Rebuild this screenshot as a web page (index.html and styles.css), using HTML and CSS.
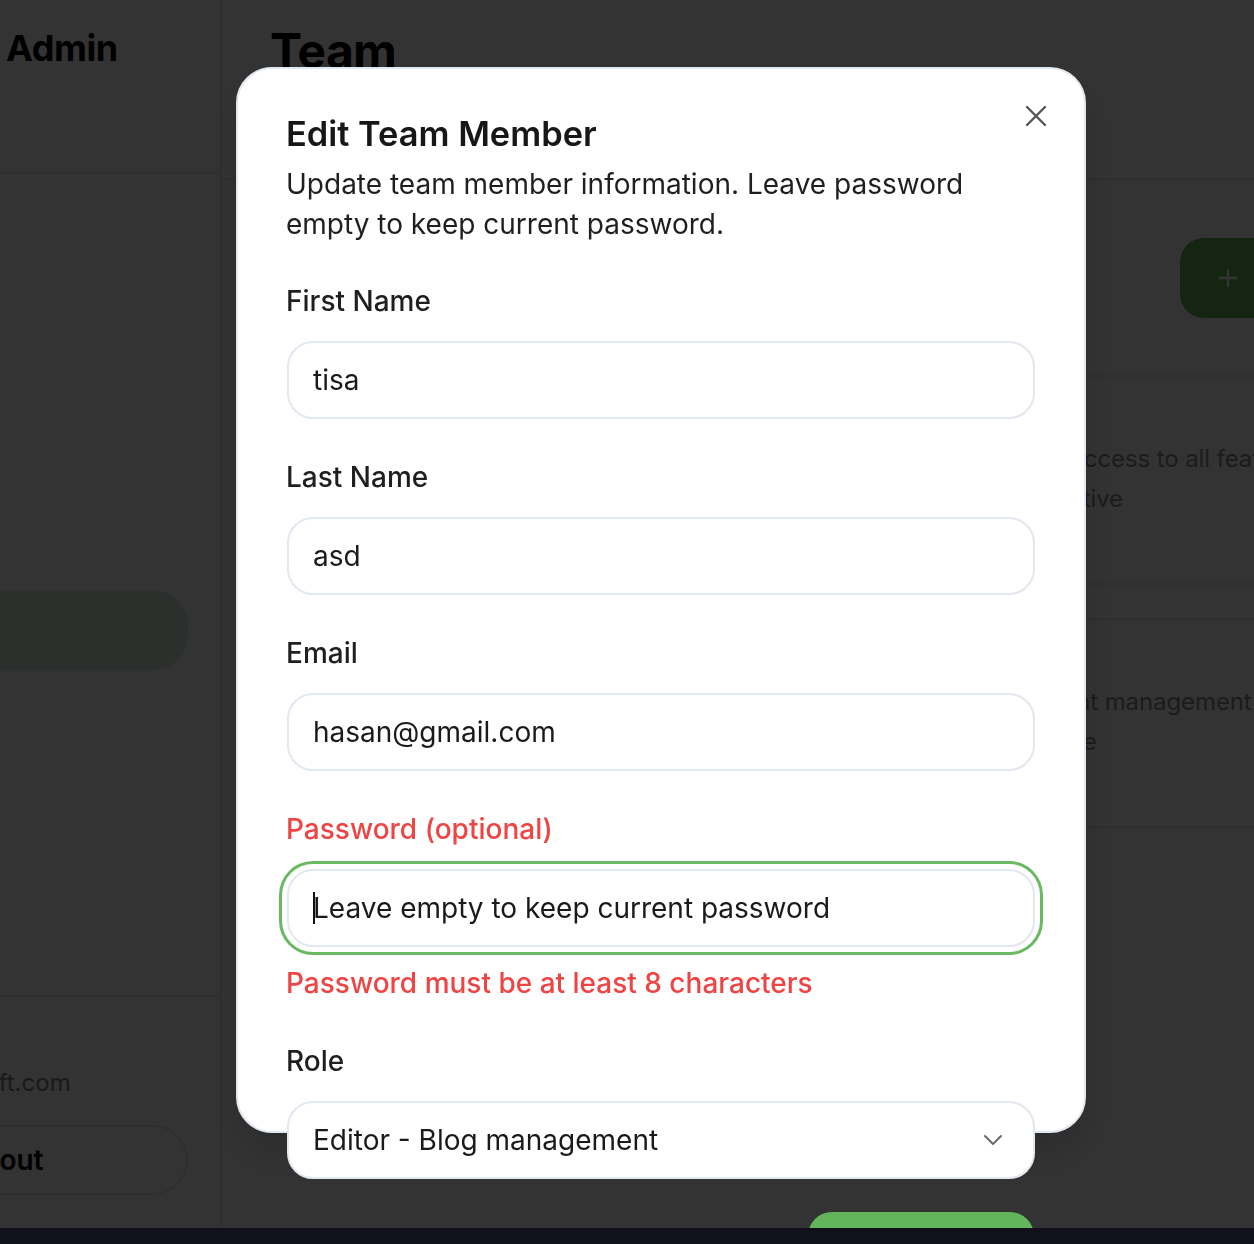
FILE: index.html
```html
<!DOCTYPE html>
<html lang="en">
<head>
<meta charset="utf-8">
<title>Team – Admin</title>
<link rel="stylesheet" href="styles.css">
</head>
<body>
<div class="app">
  <aside class="sidebar">
    <div class="brand"><span class="brand-name">Admin</span></div>
    <nav class="nav">
      <a class="nav-item">Home</a>
      <a class="nav-item">Posts</a>
      <a class="nav-item">Pages</a>
      <a class="nav-item">Media</a>
      <a class="nav-item active">Team</a>
    </nav>
    <div class="sidebar-foot">
      <div class="user-name">Admin</div>
      <div class="user-email">admin@nxsoft.com</div>
      <button class="logout">Logout</button>
    </div>
  </aside>
  <main class="main">
    <header class="main-head">
      <h1 class="page-title">Team</h1>
      <p class="page-sub">Manage your team members</p>
    </header>
    <div class="toolbar">
      <button class="add-btn">
        <svg class="add-icon" viewBox="0 0 24 24" width="28" height="28" fill="none" stroke="currentColor" stroke-width="2" stroke-linecap="round"><path d="M12 5v14M5 12h14"/></svg>
        <span>Add Member</span>
      </button>
    </div>
    <div class="list">
      <div class="card">
        <div class="card-info">
          <div class="card-name">Admin User</div>
          <div class="card-mail">admin@nxsoft.com</div>
        </div>
        <div class="card-role">
          <div class="role-line">Total access to all features</div>
          <div class="role-line">Not active</div>
        </div>
      </div>
      <div class="card">
        <div class="card-info">
          <div class="card-name">tisa asd</div>
          <div class="card-mail">hasan@gmail.com</div>
        </div>
        <div class="card-role">
          <div class="role-line">Content management</div>
          <div class="role-line">Inactive</div>
        </div>
      </div>
    </div>
  </main>
</div>

<div class="overlay"></div>

<div class="modal">
  <button class="modal-close" aria-label="Close">
    <svg viewBox="0 0 24 24" width="24" height="24" fill="none" stroke="currentColor" stroke-width="2.4" stroke-linecap="round"><path d="M3 3L21 21M21 3L3 21"/></svg>
  </button>
  <h2 class="modal-title">Edit Team Member</h2>
  <p class="modal-desc">Update team member information. Leave password empty to keep current password.</p>
  <div class="form">
    <div class="field">
      <label class="label">First Name</label>
      <div class="input">tisa</div>
    </div>
    <div class="field">
      <label class="label">Last Name</label>
      <div class="input">asd</div>
    </div>
    <div class="field">
      <label class="label">Email</label>
      <div class="input">hasan@gmail.com</div>
    </div>
    <div class="field">
      <label class="label label-error">Password (optional)</label>
      <div class="input input-focus"><span class="caret"></span>Leave empty to keep current password</div>
      <p class="error-text">Password must be at least 8 characters</p>
    </div>
    <div class="field">
      <label class="label">Role</label>
      <div class="input select">
        <span>Editor - Blog management</span>
        <svg class="chevron" viewBox="0 0 20 12" width="20" height="12" fill="none" stroke="currentColor" stroke-width="2" stroke-linecap="round" stroke-linejoin="round"><path d="M2 2l8 8 8-8"/></svg>
      </div>
    </div>
  </div>
  <div class="modal-foot">
    <button class="save-btn">Save Changes</button>
  </div>
</div>

<div class="bottom-strip"></div>
</body>
</html>
```

FILE: styles.css
```css
* { box-sizing: border-box; margin: 0; padding: 0; }

html, body {
  width: 1254px;
  height: 1244px;
  overflow: hidden;
}

body {
  font-family: Inter, "Noto Sans", "Liberation Sans", sans-serif;
  background: #ffffff;
  color: #171717;
}

/* ---------- page behind the dialog ---------- */
.app {
  display: flex;
  width: 1700px;
  height: 1244px;
  margin-left: -200px;
}

.sidebar {
  width: 422px;
  flex: none;
  display: flex;
  flex-direction: column;
  border-right: 2px solid #e8e8e8;
  background: #ffffff;
}

.brand {
  height: 174px;
  border-bottom: 2px solid #e8e8e8;
  padding: 24px 0 0 206px;
}

.brand-name {
  font-size: 36px;
  line-height: 48px;
  font-weight: 700;
  letter-spacing: -0.4px;
  color: #000;
}

.nav {
  flex: 1;
  display: flex;
  flex-direction: column;
  gap: 8px;
  padding: 64px 32px 0 24px;
}

.nav-item {
  height: 80px;
  border-radius: 34px;
  display: flex;
  align-items: center;
  padding-left: 24px;
  font-size: 28px;
  font-weight: 500;
  color: #333;
}

.nav-item.active {
  background: #d9f1de;
  color: #2f7a35;
}

.sidebar-foot {
  border-top: 2px solid #e8e8e8;
  padding: 26px 32px 49px 24px;
}

.user-name {
  font-size: 28px;
  line-height: 40px;
  font-weight: 600;
  color: #000;
  width: 120px;
  overflow: hidden;
}

.user-email {
  margin-top: 4px;
  font-size: 24px;
  line-height: 32px;
  color: #7a7f88;
  padding-left: 28px;
}

.logout {
  margin-top: 26px;
  width: 100%;
  height: 70px;
  border: 2px solid #e6e6e6;
  border-radius: 35px;
  background: #ffffff;
  font-family: inherit;
  font-size: 28px;
  font-weight: 600;
  color: #000;
  text-align: left;
  padding-left: 123px;
}

.main {
  flex: 1;
  display: flex;
  flex-direction: column;
  background: #ffffff;
}

.main-head {
  height: 180px;
  border-bottom: 2px solid #e8e8e8;
  padding: 22px 49px 0 48px;
}

.page-title {
  font-size: 48px;
  line-height: 58px;
  font-weight: 700;
  letter-spacing: -0.7px;
  color: #000;
}

.page-sub {
  margin-top: 8px;
  font-size: 28px;
  line-height: 40px;
  color: #6b7280;
}

.toolbar {
  display: flex;
  justify-content: flex-end;
  padding: 58px 35px 0 49px;
}

.add-btn {
  height: 80px;
  border: none;
  border-radius: 24px;
  background: #66b85c;
  color: #ffffff;
  display: flex;
  align-items: center;
  gap: 14px;
  padding: 0 34px;
  font-family: inherit;
  font-size: 28px;
  font-weight: 600;
}

.list {
  display: flex;
  flex-direction: column;
  gap: 33px;
  padding: 57px 49px 0;
}

.card {
  height: 210px;
  border: 2px solid #e8e8e8;
  border-radius: 24px;
  display: flex;
  padding: 62px 40px 0;
}

.card-info { flex: 1; }

.card-name {
  font-size: 28px;
  line-height: 40px;
  font-weight: 600;
  color: #000;
}

.card-mail {
  font-size: 24px;
  line-height: 40px;
  color: #6b7280;
}

.card-role {
  width: 400px;
  flex: none;
}

.role-line {
  font-size: 24px;
  line-height: 40px;
  color: #8a8a8a;
  white-space: nowrap;
  letter-spacing: -0.1px;
}

/* ---------- overlay + dialog ---------- */
.overlay {
  position: fixed;
  inset: 0;
  background: rgba(0, 0, 0, 0.8);
}

.modal {
  position: fixed;
  left: 236px;
  top: 67px;
  width: 850px;
  height: 1066px;
  background: #ffffff;
  border: 2px solid #e2e8f0;
  border-radius: 36px;
  padding: 43px 49px;
  box-shadow: 0 20px 40px rgba(0, 0, 0, 0.15);
}

.modal-close {
  position: absolute;
  top: 35px;
  right: 36px;
  width: 24px;
  height: 24px;
  border: none;
  background: transparent;
  color: #555555;
  display: flex;
}

.modal-title {
  font-size: 34.4px;
  line-height: 46px;
  font-weight: 600;
  color: #171717;
  margin-top: -1px;
  margin-left: -1px;
}

.modal-desc {
  margin-top: 7px;
  font-size: 28px;
  line-height: 40px;
  color: #1f1f1f;
  margin-left: -1px;
}

.form {
  margin-top: 39px;
  display: flex;
  flex-direction: column;
  gap: 40px;
}

.field {
  display: flex;
  flex-direction: column;
}

.label {
  font-size: 28px;
  line-height: 36px;
  font-weight: 500;
  color: #1f1f1f;
  margin-left: -1px;
}

.label-error { color: #ef4444; }

.input {
  margin-top: 22px;
  height: 78px;
  border: 2px solid #e2e8f0;
  border-radius: 26px;
  background: #ffffff;
  padding: 0 24px;
  display: flex;
  align-items: center;
  font-size: 28px;
  color: #1a1a1a;
  white-space: nowrap;
}

.input-focus {
  box-shadow: 0 0 0 5px #ffffff, 0 0 0 8px #68b960;
}

.caret {
  display: inline-block;
  width: 2px;
  height: 32px;
  background: #111111;
  margin-right: -2px;
}

.error-text {
  margin-top: 16px;
  font-size: 28px;
  line-height: 40px;
  font-weight: 500;
  color: #ef4444;
  margin-left: -1px;
}

.select {
  justify-content: space-between;
  padding-right: 30px;
}

.chevron { color: #6b6b6b; }

.modal-foot {
  margin-top: 33px;
  display: flex;
  justify-content: flex-end;
  padding-right: 1px;
}

.save-btn {
  width: 226px;
  height: 80px;
  border: none;
  border-radius: 24px;
  background: #62b55a;
  color: #ffffff;
  font-family: inherit;
  font-size: 28px;
  font-weight: 600;
}

.bottom-strip {
  position: fixed;
  left: 0;
  right: 0;
  bottom: 0;
  height: 16px;
  background: #10111a;
}
```
